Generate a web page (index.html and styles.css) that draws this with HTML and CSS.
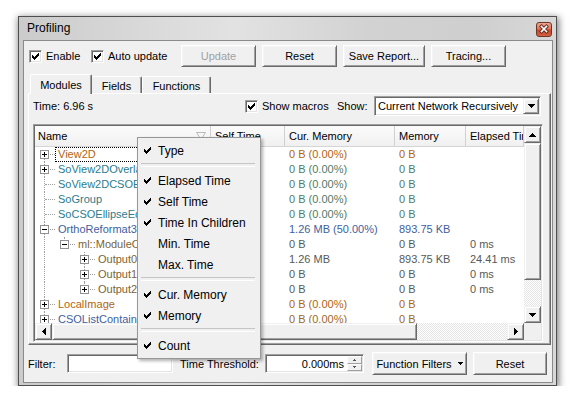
FILE: index.html
```html
<!DOCTYPE html>
<html>
<head>
<meta charset="utf-8">
<title>Profiling</title>
<link rel="stylesheet" href="styles.css">
</head>
<body>
<div class="window">
  <div class="titlebar">
    <span class="title">Profiling</span>
    <span class="close"><svg width="14" height="13" viewBox="0 0 14 13"><path d="M4.5 3.5l5 5M9.5 3.5l-5 5" stroke="#6a2a1c" stroke-width="3.4" stroke-linecap="square"/><path d="M4.5 3.5l5 5M9.5 3.5l-5 5" stroke="#fff" stroke-width="1.6" stroke-linecap="square"/></svg></span>
  </div>
  <div class="client">
    <div class="toolbar">
      <label class="check w-enable"><span class="cb"><svg width="7" height="7" viewBox="0 0 7 7"><path d="M6 0h1v1h-1zM5 1h2v1h-2zM0 2h1v1h-1zM4 2h3v1h-3zM0 3h2v1h-2zM3 3h3v1h-3zM0 4h5v1h-5zM1 5h3v1h-3zM2 6h1v1h-1z"/></svg></span>Enable</label>
      <label class="check w-auto"><span class="cb"><svg width="7" height="7" viewBox="0 0 7 7"><path d="M6 0h1v1h-1zM5 1h2v1h-2zM0 2h1v1h-1zM4 2h3v1h-3zM0 3h2v1h-2zM3 3h3v1h-3zM0 4h5v1h-5zM1 5h3v1h-3zM2 6h1v1h-1z"/></svg></span>Auto update</label>
      <button class="btn disabled w75">Update</button>
      <button class="btn w75 gap">Reset</button>
      <button class="btn w82 gap">Save Report...</button>
      <button class="btn w75 gap">Tracing...</button>
    </div>

    <div class="tabs">
      <span class="tab active t-mod">Modules</span>
      <span class="tab t-fld">Fields</span>
      <span class="tab t-fun">Functions</span>
    </div>

    <div class="pane">
      <div class="pane-top">
        <span class="time">Time: 6.96 s</span>
        <label class="check w-macros"><span class="cb"><svg width="7" height="7" viewBox="0 0 7 7"><path d="M6 0h1v1h-1zM5 1h2v1h-2zM0 2h1v1h-1zM4 2h3v1h-3zM0 3h2v1h-2zM3 3h3v1h-3zM0 4h5v1h-5zM1 5h3v1h-3zM2 6h1v1h-1z"/></svg></span>Show macros</label>
        <span class="show-lbl">Show:</span>
        <div class="combo">
          <span class="combo-text">Current Network Recursively</span>
          <span class="combo-btn"><svg width="7" height="4" viewBox="0 0 7 4"><path d="M0 0h7v1h-7zM1 1h5v1h-5zM2 2h3v1h-3zM3 3h1v1h-1z"/></svg></span>
        </div>
      </div>

      <div class="table">
        <div class="t-top">
          <div class="t-main">
            <div class="hd">
              <div class="hc col-name"><span>Name</span><svg width="10" height="8" viewBox="0 0 10 8"><path d="M0.5 0.5h9L5 7.5z" fill="none" stroke="#b9b9b9"/></svg></div>
              <div class="hc col-self">Self Time</div>
              <div class="hc col-cur">Cur. Memory</div>
              <div class="hc col-mem">Memory</div>
              <div class="hc col-el">Elapsed Time</div>
            </div>
            <div class="rows">
              <div class="row c-or">
                <div class="nm"><span class="br first"><i class="bx plus"></i></span><span class="lb focus">View2D</span></div>
                <div class="c col-self"></div><div class="c col-cur">0 B (0.00%)</div><div class="c col-mem">0 B</div><div class="c col-el"></div>
              </div>
              <div class="row c-te">
                <div class="nm"><span class="br mid"><i class="bx plus"></i></span><span class="lb">SoView2DOverlay</span></div>
                <div class="c col-self"></div><div class="c col-cur">0 B (0.00%)</div><div class="c col-mem">0 B</div><div class="c col-el"></div>
              </div>
              <div class="row c-te">
                <div class="nm"><span class="br mid"></span><span class="lb">SoView2DCSOExtensibleEditor</span></div>
                <div class="c col-self"></div><div class="c col-cur">0 B (0.00%)</div><div class="c col-mem">0 B</div><div class="c col-el"></div>
              </div>
              <div class="row c-te">
                <div class="nm"><span class="br mid"></span><span class="lb">SoGroup</span></div>
                <div class="c col-self"></div><div class="c col-cur">0 B (0.00%)</div><div class="c col-mem">0 B</div><div class="c col-el"></div>
              </div>
              <div class="row c-te">
                <div class="nm"><span class="br mid"></span><span class="lb">SoCSOEllipseEditor</span></div>
                <div class="c col-self"></div><div class="c col-cur">0 B (0.00%)</div><div class="c col-mem">0 B</div><div class="c col-el"></div>
              </div>
              <div class="row c-bl">
                <div class="nm"><span class="br mid"><i class="bx"></i></span><span class="lb">OrthoReformat3</span></div>
                <div class="c col-self"></div><div class="c col-cur">1.26 MB (50.00%)</div><div class="c col-mem">893.75 KB</div><div class="c col-el"></div>
              </div>
              <div class="row c-ol">
                <div class="nm"><span class="br v"></span><span class="br last"><i class="bx"></i></span><span class="lb">ml::ModuleOutput</span></div>
                <div class="c col-self"></div><div class="c col-cur">0 B</div><div class="c col-mem">0 B</div><div class="c col-el">0 ms</div>
              </div>
              <div class="row c-ol">
                <div class="nm"><span class="br v"></span><span class="br"></span><span class="br mid"><i class="bx plus"></i></span><span class="lb">Output0</span></div>
                <div class="c col-self"></div><div class="c col-cur">1.26 MB</div><div class="c col-mem">893.75 KB</div><div class="c col-el">24.41 ms</div>
              </div>
              <div class="row c-ol">
                <div class="nm"><span class="br v"></span><span class="br"></span><span class="br mid"><i class="bx plus"></i></span><span class="lb">Output1</span></div>
                <div class="c col-self"></div><div class="c col-cur">0 B</div><div class="c col-mem">0 B</div><div class="c col-el">0 ms</div>
              </div>
              <div class="row c-ol">
                <div class="nm"><span class="br v"></span><span class="br"></span><span class="br last"><i class="bx plus"></i></span><span class="lb">Output2</span></div>
                <div class="c col-self"></div><div class="c col-cur">0 B</div><div class="c col-mem">0 B</div><div class="c col-el">0 ms</div>
              </div>
              <div class="row c-or">
                <div class="nm"><span class="br mid"><i class="bx plus"></i></span><span class="lb">LocalImage</span></div>
                <div class="c col-self"></div><div class="c col-cur">0 B (0.00%)</div><div class="c col-mem">0 B</div><div class="c col-el"></div>
              </div>
              <div class="row c-bl2">
                <div class="nm"><span class="br mid"><i class="bx plus"></i></span><span class="lb">CSOListContainer</span></div>
                <div class="c col-self"></div><div class="c col-cur">0 B (0.00%)</div><div class="c col-mem">0 B</div><div class="c col-el"></div>
              </div>
            </div>
          </div>
          <div class="vscroll">
            <span class="sbtn"><svg width="7" height="4" viewBox="0 0 7 4"><path d="M3 0h1v1h-1zM2 1h3v1h-3zM1 2h5v1h-5zM0 3h7v1h-7z"/></svg></span>
            <span class="thumb vthumb"></span>
            <span class="track"></span>
            <span class="sbtn"><svg width="7" height="4" viewBox="0 0 7 4"><path d="M0 0h7v1h-7zM1 1h5v1h-5zM2 2h3v1h-3zM3 3h1v1h-1z"/></svg></span>
          </div>
        </div>
        <div class="t-bot">
          <div class="hscroll">
            <span class="sbtn"><svg width="4" height="7" viewBox="0 0 4 7"><path d="M3 0h1v7h-1zM2 1h1v5h-1zM1 2h1v3h-1zM0 3h1v1h-1z"/></svg></span>
            <span class="thumb hthumb"></span>
            <span class="track"></span>
            <span class="sbtn"><svg width="4" height="7" viewBox="0 0 4 7"><path d="M0 0h1v7h-1zM1 1h1v5h-1zM2 2h1v3h-1zM3 3h1v1h-1z"/></svg></span>
          </div>
          <span class="corner"></span>
        </div>
      </div>
    </div>

    <div class="bottom">
      <span class="lbl w-filter">Filter:</span>
      <span class="field w-filterin"></span>
      <span class="lbl w-thr">Time Threshold:</span>
      <span class="field spin">
        <span class="spin-val">0.000ms</span>
        <span class="spin-btns">
          <span class="sb"><svg width="3" height="2" viewBox="0 0 3 2"><path d="M1 0h1v1h-1zM0 1h3v1h-3z" fill="#555"/></svg></span>
          <span class="sb"><svg width="3" height="2" viewBox="0 0 3 2"><path d="M0 0h3v1h-3zM1 1h1v1h-1z" fill="#555"/></svg></span>
        </span>
      </span>
      <button class="btn w-ff">Function Filters<svg width="5" height="3" viewBox="0 0 5 3"><path d="M0 0h5v1h-5zM1 1h3v1h-3zM2 2h1v1h-1z"/></svg></button>
      <button class="btn w-reset2">Reset</button>
    </div>
  </div>
</div>

<div class="menu">
  <div class="mi"><span class="mck"><svg width="7" height="7" viewBox="0 0 7 7"><path d="M6 0h1v1h-1zM5 1h2v1h-2zM0 2h1v1h-1zM4 2h3v1h-3zM0 3h2v1h-2zM3 3h3v1h-3zM0 4h5v1h-5zM1 5h3v1h-3zM2 6h1v1h-1z"/></svg></span>Type</div>
  <div class="sep"></div>
  <div class="mi"><span class="mck"><svg width="7" height="7" viewBox="0 0 7 7"><path d="M6 0h1v1h-1zM5 1h2v1h-2zM0 2h1v1h-1zM4 2h3v1h-3zM0 3h2v1h-2zM3 3h3v1h-3zM0 4h5v1h-5zM1 5h3v1h-3zM2 6h1v1h-1z"/></svg></span>Elapsed Time</div>
  <div class="mi"><span class="mck"><svg width="7" height="7" viewBox="0 0 7 7"><path d="M6 0h1v1h-1zM5 1h2v1h-2zM0 2h1v1h-1zM4 2h3v1h-3zM0 3h2v1h-2zM3 3h3v1h-3zM0 4h5v1h-5zM1 5h3v1h-3zM2 6h1v1h-1z"/></svg></span>Self Time</div>
  <div class="mi"><span class="mck"><svg width="7" height="7" viewBox="0 0 7 7"><path d="M6 0h1v1h-1zM5 1h2v1h-2zM0 2h1v1h-1zM4 2h3v1h-3zM0 3h2v1h-2zM3 3h3v1h-3zM0 4h5v1h-5zM1 5h3v1h-3zM2 6h1v1h-1z"/></svg></span>Time In Children</div>
  <div class="mi"><span class="mck"></span>Min. Time</div>
  <div class="mi"><span class="mck"></span>Max. Time</div>
  <div class="sep"></div>
  <div class="mi"><span class="mck"><svg width="7" height="7" viewBox="0 0 7 7"><path d="M6 0h1v1h-1zM5 1h2v1h-2zM0 2h1v1h-1zM4 2h3v1h-3zM0 3h2v1h-2zM3 3h3v1h-3zM0 4h5v1h-5zM1 5h3v1h-3zM2 6h1v1h-1z"/></svg></span>Cur. Memory</div>
  <div class="mi"><span class="mck"><svg width="7" height="7" viewBox="0 0 7 7"><path d="M6 0h1v1h-1zM5 1h2v1h-2zM0 2h1v1h-1zM4 2h3v1h-3zM0 3h2v1h-2zM3 3h3v1h-3zM0 4h5v1h-5zM1 5h3v1h-3zM2 6h1v1h-1z"/></svg></span>Memory</div>
  <div class="sep"></div>
  <div class="mi"><span class="mck"><svg width="7" height="7" viewBox="0 0 7 7"><path d="M6 0h1v1h-1zM5 1h2v1h-2zM0 2h1v1h-1zM4 2h3v1h-3zM0 3h2v1h-2zM3 3h3v1h-3zM0 4h5v1h-5zM1 5h3v1h-3zM2 6h1v1h-1z"/></svg></span>Count</div>
</div>
</body>
</html>
```

FILE: styles.css
```css
* { box-sizing: border-box; }

body {
  margin: 0;
  background: #fff;
  font: 11px "Liberation Sans", Arial, sans-serif;
  color: #000;
}

svg { display: block; }

/* ---------- window frame ---------- */
.window {
  width: 539px;
  height: 370px;
  margin: 16px 0 0 18px;
  border: 1px solid #4f4f4f;
  background: linear-gradient(to right, #cbcbcb 0%, #dadada 25%, #e2e2e2 40%, #d2d2d2 65%, #cfcfcf 85%, #d8d8d8 100%);
  box-shadow: 1px 2px 7px 1px rgba(0, 0, 0, 0.5);
  display: flex;
  flex-direction: column;
}

.titlebar {
  height: 23px;
  display: flex;
  justify-content: space-between;
  align-items: flex-start;
  padding: 0 4px 0 8px;
}

.title {
  font-size: 12px;
  line-height: 23px;
  color: #000;
}

.close {
  margin-top: 5px;
  width: 16px;
  height: 15px;
  border: 1px solid #6e3426;
  border-radius: 3px;
  background: linear-gradient(#eaa894 0%, #dd7458 45%, #c9472c 55%, #d2603f 100%);
  display: flex;
  align-items: center;
  justify-content: center;
}

.client {
  flex: 1;
  margin: 0 3px 2px 4px;
  border: 1px solid #8a8a8a;
  background: #f0f0f0;
  display: flex;
  flex-direction: column;
}

/* ---------- common controls ---------- */
.btn {
  font: inherit;
  color: #000;
  height: 22px;
  padding: 0;
  background: #f0f0f0;
  border: 1px solid;
  border-color: #fff #696969 #696969 #fff;
  box-shadow: inset 1px 1px #f5f5f5, inset -1px -1px #a0a0a0;
  display: flex;
  align-items: center;
  justify-content: center;
}
.btn.disabled { color: #a0a0a0; }
.w75 { width: 75px; }
.w82 { width: 82px; }
.gap { margin-left: 6px; }

.check {
  display: flex;
  align-items: center;
  gap: 4px;
  white-space: nowrap;
}
.cb {
  width: 13px;
  height: 13px;
  flex: 0 0 13px;
  background: #fff;
  border: 1px solid;
  border-color: #a0a0a0 #fff #fff #a0a0a0;
  box-shadow: inset 1px 1px #696969, inset -1px -1px #e3e3e3;
  display: flex;
  align-items: center;
  justify-content: center;
}

.raised {
  background: #f0f0f0;
}

/* ---------- toolbar ---------- */
.toolbar {
  height: 22px;
  margin: 4px 0 0 5px;
  display: flex;
  align-items: center;
}
.w-enable { width: 62px; }
.w-auto { width: 90px; }

/* ---------- tabs ---------- */
.tabs {
  height: 19px;
  margin: 7px 0 0 6px;
  display: flex;
  align-items: flex-end;
  position: relative;
  z-index: 1;
}
.tab {
  height: 17px;
  display: flex;
  align-items: center;
  justify-content: center;
  background: #f0f0f0;
  border: 1px solid;
  border-bottom: 0;
  border-color: #fff #696969 transparent #fff;
  box-shadow: inset -1px 0 #a0a0a0;
  border-radius: 2px 2px 0 0;
  padding-top: 1px;
}
.tab.active {
  height: 20px;
  margin-bottom: -1px;
  padding-top: 0;
}
.t-mod { width: 62px; }
.t-fld { width: 50px; border-left: 0; }
.t-fun { width: 69px; }

/* ---------- pane ---------- */
.pane {
  height: 252px;
  margin: 0 1px 0 4px;
  border: 1px solid;
  border-color: #fff #696969 #696969 #fff;
  box-shadow: inset -1px -1px #a0a0a0;
  padding: 2px 7px 2px 4px;
  display: flex;
  flex-direction: column;
}

.pane-top {
  height: 20px;
  display: flex;
  align-items: center;
}
.time { flex: 1; }
.w-macros { width: 92px; }
.show-lbl { width: 37px; }

.combo {
  width: 167px;
  height: 20px;
  margin-right: 2px;
  background: #fff;
  border: 1px solid;
  border-color: #a0a0a0 #fff #fff #a0a0a0;
  box-shadow: inset 1px 1px #696969, inset -1px -1px #e3e3e3;
  padding: 1px;
  display: flex;
  align-items: center;
}
.combo-text {
  flex: 1;
  padding-left: 2px;
  white-space: nowrap;
}
.combo-btn {
  width: 16px;
  height: 16px;
  background: #f0f0f0;
  border: 1px solid;
  border-color: #f0f0f0 #696969 #696969 #f0f0f0;
  box-shadow: inset 1px 1px #fff, inset -1px -1px #a0a0a0;
  display: flex;
  align-items: center;
  justify-content: center;
}

/* ---------- table ---------- */
.table {
  margin-top: 8px;
  width: 510px;
  height: 218px;
  background: #fff;
  border: 1px solid;
  border-color: #a0a0a0 #fff #fff #a0a0a0;
  box-shadow: inset 1px 1px #696969, inset -1px -1px #e3e3e3;
  padding: 1px;
  display: flex;
  flex-direction: column;
}
.t-top {
  height: 197px;
  display: flex;
}
.t-main {
  width: 489px;
  display: flex;
  flex-direction: column;
  overflow: hidden;
}
.hd {
  height: 21px;
  display: flex;
  background: linear-gradient(#fbfbfb, #f0f0f0);
  border-bottom: 1px solid #d5d5d5;
}
.hc {
  height: 20px;
  padding-left: 4px;
  border-right: 1px solid #d0d0d0;
  display: flex;
  align-items: center;
  white-space: nowrap;
  overflow: hidden;
}
.hc.col-name {
  padding: 0 4px 0 3px;
  justify-content: space-between;
}

.col-name { width: 176px; flex: 0 0 176px; }
.col-self { width: 74px; flex: 0 0 74px; }
.col-cur { width: 110px; flex: 0 0 110px; }
.col-mem { width: 71px; flex: 0 0 71px; }
.col-el { width: 58px; flex: 0 0 58px; }

.rows {
  flex: 1;
  overflow: hidden;
}
.row {
  height: 15px;
  line-height: 15px;
  display: flex;
}
.nm {
  width: 176px;
  flex: 0 0 176px;
  display: flex;
  overflow: hidden;
}
.c {
  padding-left: 4px;
  white-space: nowrap;
  overflow: hidden;
}
.lb {
  margin-left: 3px;
  white-space: nowrap;
}
.lb.focus {
  margin-left: 0;
  padding-left: 2px;
  flex: 1;
  border: 1px dotted #000;
  line-height: 13px;
}

.c-or { color: #b3640f; }
.c-te .lb { color: #2b7c8e; }
.c-te .c { color: #4f7c68; }
.c-bl { color: #4160a0; }
.c-ol .lb { color: #7a6538; }
.c-ol .c { color: #555a5a; }
.c-bl2 .lb { color: #4160a0; }
.c-bl2 .c { color: #9a6a2a; }

/* tree branches */
.br {
  width: 20px;
  height: 15px;
  flex: 0 0 20px;
  position: relative;
  display: flex;
  align-items: center;
}
.br::before,
.br::after {
  content: "";
  position: absolute;
}
.br.mid::before,
.br.v::before {
  left: 9px;
  top: 0;
  bottom: 0;
  border-left: 1px dotted #a0a0a0;
}
.br.first::before {
  left: 9px;
  top: 7px;
  bottom: 0;
  border-left: 1px dotted #a0a0a0;
}
.br.last::before {
  left: 9px;
  top: 0;
  height: 8px;
  border-left: 1px dotted #a0a0a0;
}
.br.mid::after,
.br.first::after,
.br.last::after {
  left: 10px;
  right: 0;
  top: 7px;
  border-top: 1px dotted #a0a0a0;
}
.bx {
  width: 9px;
  height: 9px;
  margin-left: 5px;
  border: 1px solid #929292;
  background: #fff;
  position: relative;
  z-index: 1;
}
.bx::before {
  content: "";
  position: absolute;
  left: 1px;
  top: 3px;
  width: 5px;
  height: 1px;
  background: #000;
}
.bx.plus::after {
  content: "";
  position: absolute;
  left: 3px;
  top: 1px;
  width: 1px;
  height: 5px;
  background: #000;
}

/* scrollbars */
.vscroll {
  width: 17px;
  display: flex;
  flex-direction: column;
}
.sbtn,
.thumb {
  background: #f0f0f0;
  border: 1px solid;
  border-color: #f0f0f0 #696969 #696969 #f0f0f0;
  box-shadow: inset 1px 1px #fff, inset -1px -1px #a0a0a0;
}
.sbtn {
  width: 17px;
  height: 17px;
  flex: 0 0 17px;
  display: flex;
  align-items: center;
  justify-content: center;
}
.vthumb { height: 137px; }
.track {
  flex: 1;
  background: repeating-conic-gradient(#ffffff 0 25%, #e4e4e4 0 50%) 0 0 / 2px 2px;
}
.t-bot {
  height: 17px;
  display: flex;
}
.hscroll {
  width: 489px;
  display: flex;
}
.hthumb { width: 365px; }
.corner {
  flex: 1;
  background: #f0f0f0;
}

/* ---------- bottom row ---------- */
.bottom {
  height: 23px;
  margin-top: 7px;
  padding-left: 4px;
  display: flex;
  align-items: center;
}
.lbl { white-space: nowrap; }
.w-filter { width: 39px; }
.w-thr { width: 85px; margin-left: 7px; }
.field {
  height: 19px;
  background: #fff;
  border: 1px solid;
  border-color: #a0a0a0 #fff #fff #a0a0a0;
  box-shadow: inset 1px 1px #696969, inset -1px -1px #e3e3e3;
}
.w-filterin { width: 106px; }
.spin {
  width: 99px;
  display: flex;
  align-items: center;
  justify-content: flex-end;
  padding: 1px 1px 1px 1px;
}
.spin-val { padding-right: 3px; }
.spin-btns {
  width: 15px;
  height: 15px;
  display: flex;
  flex-direction: column;
}
.sb {
  height: 7.5px;
  flex: 1;
  background: #f0f0f0;
  border: 1px solid;
  border-color: #fff #a0a0a0 #a0a0a0 #fff;
  display: flex;
  align-items: center;
  justify-content: center;
}
.w-ff {
  width: 95px;
  height: 23px;
  margin-left: 8px;
  gap: 6px;
}
.w-reset2 {
  width: 74px;
  height: 23px;
  margin-left: 6px;
}

/* ---------- popup menu ---------- */
.menu {
  position: absolute;
  left: 137px;
  top: 137px;
  width: 124px;
  padding: 2px 2px;
  background: #f0f0f0;
  border: 1px solid #979797;
  box-shadow: 2px 2px 3px rgba(0, 0, 0, 0.3);
  font-size: 12px;
}
.mi {
  height: 21px;
  display: flex;
  align-items: center;
  white-space: nowrap;
}
.mck {
  width: 18px;
  flex: 0 0 18px;
  padding-left: 4px;
}
.sep {
  height: 9px;
  padding-top: 2px;
  margin: 0 3px 0 1px;
}
.sep::before {
  content: "";
  display: block;
  height: 2px;
  border-top: 1px solid #c5c5c5;
  border-bottom: 1px solid #fff;
}
```
